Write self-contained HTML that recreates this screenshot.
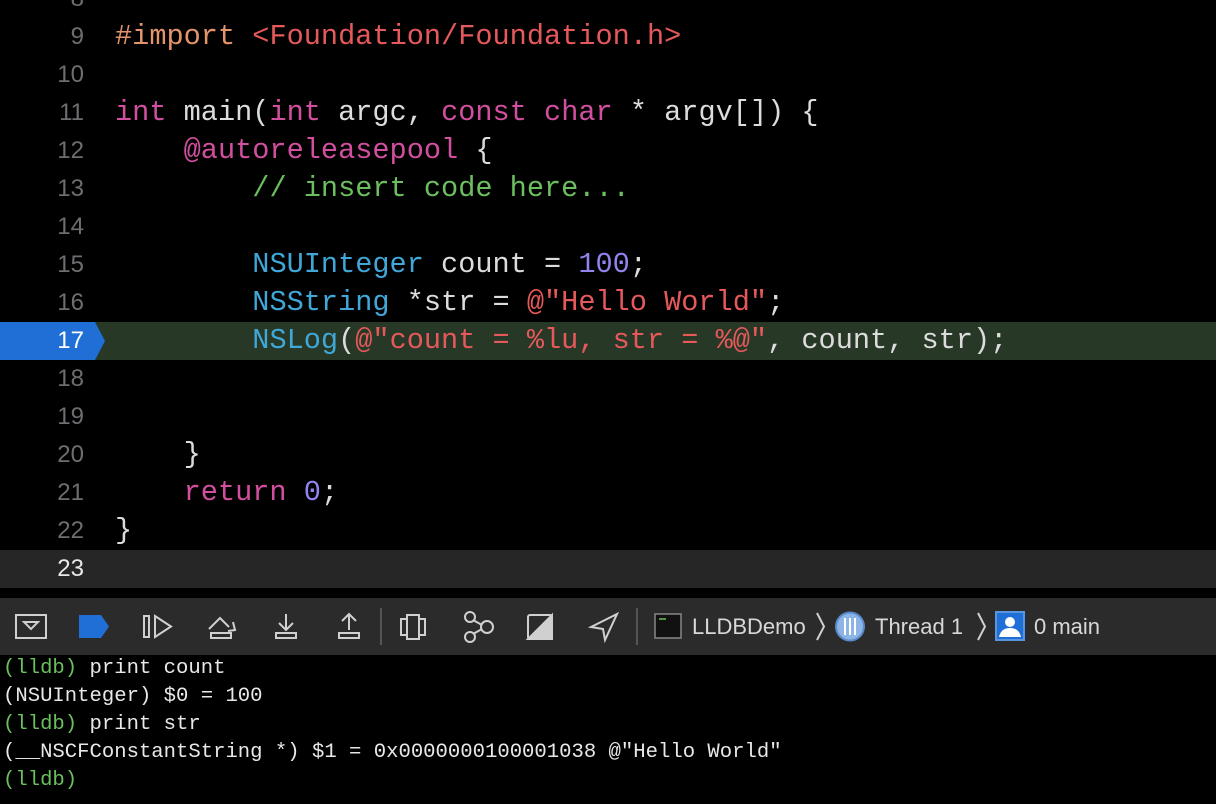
<!DOCTYPE html>
<html><head><meta charset="utf-8"><style>
body{margin:0;width:1216px;height:804px;background:#000;overflow:hidden;position:relative;font-family:"Liberation Mono",monospace}
.ln{position:absolute;left:0;width:84px;text-align:right;font-family:"Liberation Sans",sans-serif;font-size:24px;color:#6e6e72;height:38px;line-height:38px}
.cd{position:absolute;left:115px;font-size:28.6px;color:#dcdcdc;height:38px;line-height:38px;white-space:pre}
.k{color:#d24fa0}.p{color:#e3946a}.s{color:#e5595b}.c{color:#6cbf5e}.t{color:#3fa8d8}.n{color:#9184ef}
.con{position:absolute;left:3px;font-size:20.6px;color:#e8e8e8;line-height:28px;white-space:pre}
.g{color:#6cbf5e}
.tb{position:absolute;top:598px;left:0;width:1216px;height:57px;background:#2b2b2b}
.tt{position:absolute;top:0;line-height:57px;font-family:"Liberation Sans",sans-serif;font-size:22px;color:#d8d8d8}
</style></head><body>
<div style="position:absolute;left:0;top:322px;width:1216px;height:38px;background:#273826"></div>
<svg style="position:absolute;left:0;top:322px" width="106" height="38"><polygon points="0,0 95,0 105,19 95,38 0,38" fill="#1f6fd6"/></svg>
<div style="position:absolute;left:0;top:550px;width:1216px;height:38px;background:#262626"></div>

<div class="ln" style="top:-20px">8</div>
<div class="ln" style="top:18px">9</div><div class="cd" style="top:18px"><span class="p">#import</span> <span class="s">&lt;Foundation/Foundation.h&gt;</span></div>
<div class="ln" style="top:56px">10</div>
<div class="ln" style="top:94px">11</div><div class="cd" style="top:94px"><span class="k">int</span> main(<span class="k">int</span> argc, <span class="k">const</span> <span class="k">char</span> * argv[]) {</div>
<div class="ln" style="top:132px">12</div><div class="cd" style="top:132px">    <span class="k">@autoreleasepool</span> {</div>
<div class="ln" style="top:170px">13</div><div class="cd" style="top:170px">        <span class="c">// insert code here...</span></div>
<div class="ln" style="top:208px">14</div>
<div class="ln" style="top:246px">15</div><div class="cd" style="top:246px">        <span class="t">NSUInteger</span> count = <span class="n">100</span>;</div>
<div class="ln" style="top:284px">16</div><div class="cd" style="top:284px">        <span class="t">NSString</span> *str = <span class="s">@"Hello World"</span>;</div>
<div class="ln" style="top:322px;color:#fff">17</div><div class="cd" style="top:322px">        <span class="t">NSLog</span>(<span class="s">@"count = %lu, str = %@"</span>, count, str);</div>
<div class="ln" style="top:360px">18</div>
<div class="ln" style="top:398px">19</div>
<div class="ln" style="top:436px">20</div><div class="cd" style="top:436px">    }</div>
<div class="ln" style="top:474px">21</div><div class="cd" style="top:474px">    <span class="k">return</span> <span class="n">0</span>;</div>
<div class="ln" style="top:512px">22</div><div class="cd" style="top:512px">}</div>
<div class="ln" style="top:550px;color:#e8e8e8">23</div>

<div class="tb">
<svg width="1216" height="57" style="position:absolute;left:0;top:0" fill="none" stroke="#d0d0d0" stroke-width="2">
<rect x="16" y="17" width="30" height="23"/><polygon points="24,24 38,24 31,31"/>
<path d="M79,17 H101 L109,28.5 L101,40 H79 Z" fill="#1f6fd6" stroke="none"/>
<rect x="144" y="18" width="5" height="21"/><polygon points="155,18 171,28.5 155,39"/>
<path d="M209,31 L220,20 L229,29 M233,24 L235,32 L228,33"/><rect x="211" y="35" width="20" height="5"/>
<path d="M286,16 V31 M279,25 L286,32 L293,25"/><rect x="276" y="35" width="20" height="5"/>
<path d="M349,32 V16 M342,23 L349,16 L356,23"/><rect x="339" y="35" width="20" height="5"/>
<line x1="381" y1="10" x2="381" y2="47" stroke="#555"/>
<rect x="407" y="17" width="12" height="24"/><path d="M407,21 H401 V37 H407 M419,21 H425 V37 H419"/>
<circle cx="470" cy="19" r="5"/><circle cx="470" cy="39" r="5"/><circle cx="487" cy="29" r="6"/><path d="M473,22 L482,27 M473,36 L482,31"/>
<rect x="528" y="17" width="24" height="24" rx="2"/><polygon points="552,17 552,41 528,41" fill="#d0d0d0"/>
<path d="M617,16 L591,29 L603,31 L605,42 Z"/>
<line x1="637" y1="10" x2="637" y2="47" stroke="#555"/>
<rect x="655" y="16" width="26" height="24" fill="#111" stroke="#888" stroke-width="1.5"/><path d="M659,21 H666" stroke="#6cbf5e" stroke-width="1.5"/>
<path d="M817,15 L824,28.5 L817,42 M978,15 L985,28.5 L978,42" stroke="#d0d0d0"/>
<circle cx="850" cy="28.5" r="14" fill="#8cb4e6" stroke="#5a8acb"/><path d="M845,20 V37 M850,20 V37 M855,20 V37" stroke="#fff"/>
<rect x="996" y="14" width="28" height="28" fill="#1f6fd6" stroke="#5a95e0"/><circle cx="1010" cy="24" r="5" fill="#fff" stroke="none"/><path d="M999,39 Q1001,30 1010,30 Q1019,30 1021,39 Z" fill="#fff" stroke="none"/>
</svg>
<div class="tt" style="left:692px">LLDBDemo</div>
<div class="tt" style="left:875px">Thread 1</div>
<div class="tt" style="left:1034px">0 main</div>
</div>

<div class="con" style="top:655px"><span class="g">(lldb)</span> print count</div>
<div class="con" style="top:683px">(NSUInteger) $0 = 100</div>
<div class="con" style="top:711px"><span class="g">(lldb)</span> print str</div>
<div class="con" style="top:739px">(__NSCFConstantString *) $1 = 0x0000000100001038 @"Hello World"</div>
<div class="con" style="top:767px"><span class="g">(lldb)</span></div>
</body></html>
